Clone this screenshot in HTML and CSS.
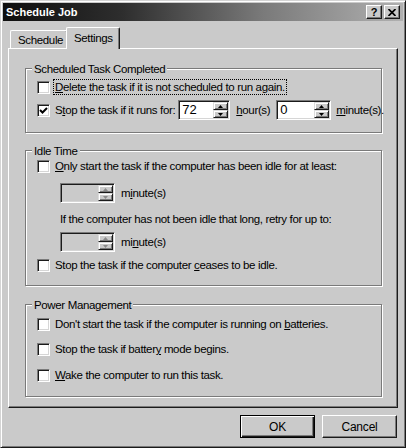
FILE: index.html
```html
<!DOCTYPE html>
<html>
<head>
<meta charset="utf-8">
<title>Schedule Job</title>
<link rel="stylesheet" href="styles.css">
</head>
<body>
<div class="window">
  <div class="titlebar">
    <span class="title">Schedule Job</span>
    <div class="tbtns">
      <span class="tbtn help">?</span>
      <span class="tbtn close"><svg width="8" height="7" viewBox="0 0 8 7"><path d="M0.5 0 L7.5 7 M7.5 0 L0.5 7" stroke="#000" stroke-width="1.7"/></svg></span>
    </div>
  </div>
  <div class="tabs">
    <div class="tab">Schedule</div>
    <div class="tab active">Settings</div>
  </div>
  <div class="panel">
    <div class="group g1">
      <span class="legend">Scheduled Task Completed</span>
      <div class="row r-a">
        <span class="cb"></span>
        <span class="lbl focus"><u>D</u>elete the task if it is not scheduled to run again.</span>
      </div>
      <div class="row r-b">
        <span class="cb"><svg width="9" height="9" viewBox="0 0 9 9"><path d="M1 4 L3.5 6.5 L8 2" fill="none" stroke="#000" stroke-width="2"/></svg></span>
        <span class="lbl">S<u>t</u>op the task if it runs for:</span>
        <span class="spin w52"><span class="val">72</span><span class="arrows"><span class="arr"><svg width="5" height="3" viewBox="0 0 5 3"><path d="M2.5 0 L5 3 L0 3Z" fill="#000"/></svg></span><span class="arr"><svg width="5" height="3" viewBox="0 0 5 3"><path d="M0 0 L5 0 L2.5 3Z" fill="#000"/></svg></span></span></span>
        <span class="lbl unit u-hour"><u>h</u>our(s)</span>
        <span class="spin w55"><span class="val">0</span><span class="arrows"><span class="arr"><svg width="5" height="3" viewBox="0 0 5 3"><path d="M2.5 0 L5 3 L0 3Z" fill="#000"/></svg></span><span class="arr"><svg width="5" height="3" viewBox="0 0 5 3"><path d="M0 0 L5 0 L2.5 3Z" fill="#000"/></svg></span></span></span>
        <span class="lbl unit u-min"><u>m</u>inute(s).</span>
      </div>
    </div>

    <div class="group g2">
      <span class="legend">Idle Time</span>
      <div class="row r-a">
        <span class="cb"></span>
        <span class="lbl"><u>O</u>nly start the task if the computer has been idle for at least:</span>
      </div>
      <div class="row indent r-spin1">
        <span class="spin w55 disabled"><span class="val"></span><span class="arrows"><span class="arr"><svg width="5" height="3" viewBox="0 0 5 3"><path d="M2.5 0 L5 3 L0 3Z" fill="#8a8a8a"/></svg></span><span class="arr"><svg width="5" height="3" viewBox="0 0 5 3"><path d="M0 0 L5 0 L2.5 3Z" fill="#8a8a8a"/></svg></span></span></span>
        <span class="lbl unit">m<u>i</u>nute(s)</span>
      </div>
      <div class="row indent r-text">
        <span class="lbl">If the computer has not been idle that long, retry for up to:</span>
      </div>
      <div class="row indent r-spin2">
        <span class="spin w55 disabled"><span class="val"></span><span class="arrows"><span class="arr"><svg width="5" height="3" viewBox="0 0 5 3"><path d="M2.5 0 L5 3 L0 3Z" fill="#8a8a8a"/></svg></span><span class="arr"><svg width="5" height="3" viewBox="0 0 5 3"><path d="M0 0 L5 0 L2.5 3Z" fill="#8a8a8a"/></svg></span></span></span>
        <span class="lbl unit">mi<u>n</u>ute(s)</span>
      </div>
      <div class="row r-last">
        <span class="cb"></span>
        <span class="lbl">Stop the task if the computer <u>c</u>eases to be idle.</span>
      </div>
    </div>

    <div class="group g3">
      <span class="legend">Power Management</span>
      <div class="row p1">
        <span class="cb"></span>
        <span class="lbl">Don't start the task if the computer is running on <u>b</u>atteries.</span>
      </div>
      <div class="row p2">
        <span class="cb"></span>
        <span class="lbl">Stop the task if batter<u>y</u> mode begins.</span>
      </div>
      <div class="row p3">
        <span class="cb"></span>
        <span class="lbl"><u>W</u>ake the computer to run this task.</span>
      </div>
    </div>
  </div>
  <div class="buttons">
    <button class="btn default">OK</button>
    <button class="btn">Cancel</button>
  </div>
</div>
</body>
</html>
```

FILE: styles.css
```css
* { box-sizing: border-box; }
html, body { margin: 0; padding: 0; }
body {
  width: 406px;
  height: 448px;
  background: #cacaca;
  font-family: "Liberation Sans", Arial, sans-serif;
  font-size: 11.5px;
  letter-spacing: -0.35px;
  color: #000;
  overflow: hidden;
}
u { text-decoration: underline; text-underline-offset: 1px; }

.window {
  width: 406px;
  height: 448px;
  border: 1px solid;
  border-color: #d4d4d4 #1a1a1a #1a1a1a #d4d4d4;
  box-shadow: inset 1px 1px #fff, inset -1px -1px #7a7a7a;
  padding: 2px;
  background: #cacaca;
}

.titlebar {
  height: 18px;
  display: flex;
  align-items: center;
  justify-content: space-between;
  background: linear-gradient(to right, #0e0e0e 0%, #2e2e2e 30%, #7a7a7a 65%, #b0b0b0 100%);
  padding: 0 3px 0 3px;
}
.title {
  font-family: "Liberation Sans", Arial, sans-serif;
  font-weight: bold;
  font-size: 11px;
  letter-spacing: 0;
  color: #fff;
}
.tbtns { display: flex; gap: 2px; }
.tbtn {
  width: 16px;
  height: 14px;
  background: #cacaca;
  border: 1px solid;
  border-color: #fff #1a1a1a #1a1a1a #fff;
  box-shadow: inset -1px -1px #7a7a7a;
  display: flex;
  align-items: center;
  justify-content: center;
  font-family: "Liberation Sans", Arial, sans-serif;
  font-weight: bold;
  font-size: 11px;
  letter-spacing: 0;
  line-height: 1;
}

.tabs {
  display: flex;
  align-items: flex-end;
  height: 22px;
  margin: 6px 0 0 5px;
  padding-left: 2px;
  position: relative;
  z-index: 1;
}
.tab {
  height: 18px;
  width: 58px;
  margin-bottom: 1px;
  padding: 3px 0 0 7px;
  border: 1px solid;
  border-bottom: none;
  border-color: #fff #1a1a1a #1a1a1a #fff;
  box-shadow: inset -1px 0 #7a7a7a;
  border-radius: 2px 2px 0 0;
  background: #cacaca;
  line-height: 12px;
}
.tab.active {
  position: relative;
  height: 22px;
  width: 54px;
  margin-left: -2px;
  margin-bottom: 0;
  padding: 4px 0 0 7px;
}

.panel {
  width: 390px;
  height: 360px;
  margin: -1px 0 0 5px;
  border: 1px solid;
  border-color: #fff #1a1a1a #1a1a1a #fff;
  box-shadow: inset -1px -1px #7a7a7a;
  padding: 19px 0 0 16px;
}

.group {
  position: relative;
  width: 357px;
  border: 1px solid #7a7a7a;
  box-shadow: 1px 1px #fff, inset 1px 1px #fff;
  padding-left: 11px;
}
.legend {
  position: absolute;
  top: -7px;
  left: 6px;
  padding: 0 2px;
  background: #cacaca;
  line-height: 14px;
}
.g1 { padding-top: 8px; padding-bottom: 11px; }
.g2 { margin-top: 17px; padding-top: 5px; padding-bottom: 10px; }
.g3 { margin-top: 18px; padding-top: 9px; padding-bottom: 11px; }

.row {
  display: flex;
  align-items: center;
  height: 20px;
}
.g1 .r-b { height: 22px; margin-top: 2px; }
.r-spin1 { margin-top: 7px; }
.r-text { margin-top: 8px; height: 16px; }
.r-spin2 { margin-top: 5px; }
.r-last { margin-top: 3px; }
.p2 { margin-top: 5px; }
.p3 { margin-top: 6px; }
.indent { padding-left: 23px; }

.cb {
  flex: none;
  width: 13px;
  height: 13px;
  margin-right: 5px;
  background: #fff;
  border: 1px solid;
  border-color: #7a7a7a #fff #fff #7a7a7a;
  box-shadow: inset 1px 1px #1a1a1a, inset -1px -1px #d6d6d6;
  display: flex;
  align-items: center;
  justify-content: center;
}
.cb svg { display: block; }

.lbl { white-space: nowrap; line-height: 14px; }
.focus { outline: 1px dotted #000; outline-offset: 0; padding: 0 1px; margin-left: -1px; }
.unit { margin: 0 5px 0 6px; }
.u-hour { margin-right: 3px; }
.u-min { margin-left: 5px; }

.spin {
  flex: none;
  display: flex;
  height: 20px;
  margin-left: 3px;
  background: #fff;
  border: 1px solid;
  border-color: #7a7a7a #fff #fff #7a7a7a;
  box-shadow: inset 1px 1px #1a1a1a, inset -1px -1px #d6d6d6;
  padding: 1px;
}
.w52 { width: 52px; }
.w55 { width: 55px; }
.indent .spin { margin-left: 0; }
.spin .val { flex: 1; padding-left: 2px; line-height: 16px; font-size: 13px; letter-spacing: 0; }
.spin.disabled { background: #cacaca; }
.arrows {
  width: 15px;
  display: flex;
  flex-direction: column;
}
.arr {
  flex: 1;
  background: #cacaca;
  border: 1px solid;
  border-color: #dcdcdc #1a1a1a #1a1a1a #dcdcdc;
  box-shadow: inset 1px 1px #fff, inset -1px -1px #7a7a7a;
  display: flex;
  align-items: center;
  justify-content: center;
}
.arr svg { display: block; }

.buttons {
  display: flex;
  justify-content: flex-end;
  gap: 7px;
  margin-top: 7px;
  padding-right: 6px;
}
.btn {
  width: 75px;
  height: 23px;
  padding: 0;
  font-family: inherit;
  font-size: 12px;
  letter-spacing: -0.2px;
  color: #000;
  background: #cacaca;
  border: 1px solid;
  border-color: #fff #1a1a1a #1a1a1a #fff;
  box-shadow: inset -1px -1px #7a7a7a;
  border-radius: 0;
}
.btn.default {
  border-color: #000;
  box-shadow: inset 1px 1px #fff, inset -1px -1px #1a1a1a, inset -2px -2px #7a7a7a;
}
```
